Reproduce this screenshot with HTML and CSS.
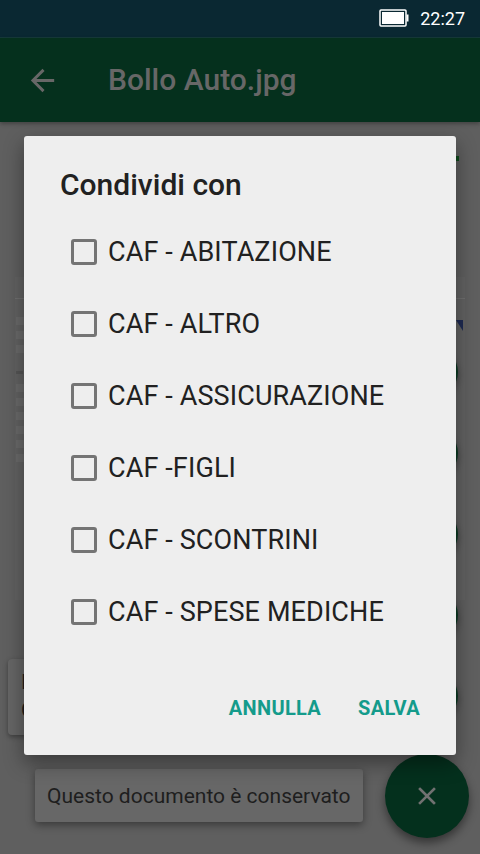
FILE: index.html
```html
<!DOCTYPE html>
<html lang="it">
<head>
    <meta charset="UTF-8">
    <meta name="viewport" content="width=device-width, initial-scale=1.0">
    <title>Bollo Auto.jpg</title>
    <link rel="stylesheet" href="styles.css">
</head>
<body>
    <div class="screen">
        <div class="statusbar">
            <svg class="battery" width="30" height="18" viewBox="0 0 30 18">
                <rect x="1" y="1" width="26" height="16" rx="1" fill="none" stroke="#ffffff" stroke-width="1.5"/>
                <rect x="3" y="3" width="22" height="12" fill="#ffffff"/>
                <rect x="27.5" y="5.5" width="2" height="7" fill="#ffffff"/>
            </svg>
            <span class="clock">22:27</span>
        </div>

        <div class="appbar">
            <svg class="back" width="35" height="35" viewBox="0 0 24 24">
                <path d="M20 11H7.83l5.59-5.59L12 4l-8 8 8 8 1.41-1.41L7.83 13H20v-2z" fill="#676767"/>
            </svg>
            <h1>Bollo Auto.jpg</h1>
        </div>

        <div class="content">
            <div class="tab-mark"></div>
            <div class="preview">
                <div class="preview-head"></div>
                <div class="preview-body">
                    <div class="bar"></div>
                    <div class="bar"></div>
                    <div class="bar"></div>
                    <div class="bar label"></div>
                    <div class="bar"></div>
                    <div class="bar"></div>
                    <div class="bar"></div>
                    <div class="bar"></div>
                    <div class="bar"></div>
                    <div class="bar"></div>
                </div>
                <div class="preview-flag"></div>
            </div>
        </div>

        <!-- mini action buttons hidden behind the dialog -->
        <div class="mini-fabs">
            <div class="mini"></div>
            <div class="mini"></div>
            <div class="mini"></div>
            <div class="mini"></div>
            <div class="mini"></div>
        </div>

        <div class="info-card">
            <div>Informazioni</div>
            <div>Conservazione</div>
        </div>

        <div class="snackbar">Questo documento è conservato</div>

        <div class="fab">
            <svg width="20" height="20" viewBox="0 0 20 20">
                <path d="M3 3L17 17M17 3L3 17" stroke="#717171" stroke-width="2.6" stroke-linecap="square"/>
            </svg>
        </div>

        <div class="dialog">
            <h2>Condividi con</h2>
            <div class="options" id="options"></div>
            <div class="dialog-actions">
                <button>ANNULLA</button>
                <button>SALVA</button>
            </div>
        </div>
    </div>

    <script>
        const groups = [
            'CAF - ABITAZIONE',
            'CAF - ALTRO',
            'CAF - ASSICURAZIONE',
            'CAF -FIGLI',
            'CAF - SCONTRINI',
            'CAF - SPESE MEDICHE'
        ];

        const list = document.getElementById('options');
        for (const name of groups) {
            const row = document.createElement('label');
            row.className = 'option';
            row.innerHTML = `<span class="box"></span><span class="option-name">${name}</span>`;
            list.appendChild(row);
        }
    </script>
</body>
</html>
```

FILE: styles.css
```css
* {
    box-sizing: border-box;
}

body {
    margin: 0;
    background-color: #5f5f5f;
    font-family: Roboto, 'Noto Sans', sans-serif;
}

.screen {
    position: relative;
    width: 480px;
    height: 854px;
    overflow: hidden;
    background-color: #5f5f5f;
    display: flex;
    flex-direction: column;
}

.statusbar {
    height: 38px;
    background-color: #0a2832;
    border-bottom: 1px solid #163a3a;
    display: flex;
    justify-content: flex-end;
    align-items: center;
    padding-right: 15px;
    gap: 11px;
}

.battery {
    margin-top: -1px;
}

.clock {
    color: #ffffff;
    font-size: 18px;
    margin-top: -1px;
}

.appbar {
    height: 84px;
    background-color: #05301d;
    display: flex;
    align-items: center;
    padding-left: 25px;
    gap: 48px;
    box-shadow: 0 2px 4px rgba(0, 0, 0, 0.3);
    position: relative;
    z-index: 1;
}

.appbar h1 {
    margin: 0;
    font-size: 30px;
    line-height: 36px;
    font-weight: 500;
    color: #676767;
}

.content {
    flex: 1;
    position: relative;
}

.tab-mark {
    position: absolute;
    left: 455px;
    top: 34px;
    width: 4px;
    height: 5px;
    background-color: #0f4a1c;
}

.preview {
    margin: 155px 15px 0;
    height: 323px;
    background-color: #626262;
    position: relative;
}

.preview-head {
    height: 22px;
    border-bottom: 1px solid #6f6f6f;
}

.preview-body {
    padding: 18px 0 0 1px;
    display: flex;
    flex-direction: column;
    gap: 6px;
}

.bar {
    width: 9px;
    height: 8px;
    background-color: #6a6a6a;
}

.bar.label {
    margin: 12px 0 4px;
    width: 7px;
    height: 3px;
    background-color: #555;
}

.preview-flag {
    position: absolute;
    right: 2px;
    top: 43px;
    width: 0;
    height: 0;
    border-left: 7px solid transparent;
    border-top: 11px solid #1e2a52;
}

.mini-fabs {
    position: absolute;
    left: 408px;
    top: 347px;
    display: flex;
    flex-direction: column;
    gap: 31px;
}

.mini {
    width: 50px;
    height: 50px;
    border-radius: 50%;
    background-color: #0a3a22;
    box-shadow: 0 3px 6px rgba(0, 0, 0, 0.35);
}

.info-card {
    position: absolute;
    left: 8px;
    top: 659px;
    width: 300px;
    height: 76px;
    background-color: #656565;
    border-radius: 4px;
    box-shadow: 0 2px 5px rgba(0, 0, 0, 0.35);
    padding: 9px 0 0 13px;
    font-size: 21px;
    line-height: 28px;
    color: #1c1c1c;
}

.snackbar {
    position: absolute;
    left: 35px;
    top: 769px;
    width: 328px;
    height: 53px;
    background-color: #676767;
    border-radius: 3px;
    box-shadow: 0 3px 8px rgba(0, 0, 0, 0.4);
    display: flex;
    align-items: center;
    padding-left: 12px;
    font-size: 21px;
    color: #1e1e1e;
}

.fab {
    position: absolute;
    left: 385px;
    top: 754px;
    width: 84px;
    height: 84px;
    border-radius: 50%;
    background-color: #04301d;
    box-shadow: 0 5px 10px rgba(0, 0, 0, 0.45);
    display: flex;
    align-items: center;
    justify-content: center;
}

.dialog {
    position: absolute;
    left: 24px;
    top: 136px;
    width: 432px;
    height: 619px;
    background-color: #eeeeee;
    border-radius: 3px;
    box-shadow: 0 8px 20px rgba(0, 0, 0, 0.4);
    padding-top: 31px;
    z-index: 2;
}

.dialog h2 {
    margin: 0;
    padding-left: 36px;
    font-size: 30px;
    line-height: 36px;
    font-weight: 500;
    color: #212121;
}

.options {
    margin-top: 13px;
    display: flex;
    flex-direction: column;
}

.option {
    height: 72px;
    display: flex;
    align-items: center;
    padding-left: 47px;
    gap: 11px;
}

.box {
    width: 26px;
    height: 26px;
    border: 3px solid #747474;
    border-radius: 3px;
    flex-shrink: 0;
}

.option-name {
    font-size: 27px;
    line-height: 32px;
    letter-spacing: 0.12px;
    color: #212121;
}

.dialog-actions {
    margin-top: 36px;
    height: 48px;
    display: flex;
    justify-content: flex-end;
    align-items: center;
    gap: 37px;
    padding-right: 36px;
}

.dialog-actions button {
    background: none;
    border: none;
    padding: 0;
    font-family: Roboto, 'Noto Sans', sans-serif;
    font-size: 20px;
    font-weight: 700;
    letter-spacing: 0.3px;
    color: #149b8b;
}
```
